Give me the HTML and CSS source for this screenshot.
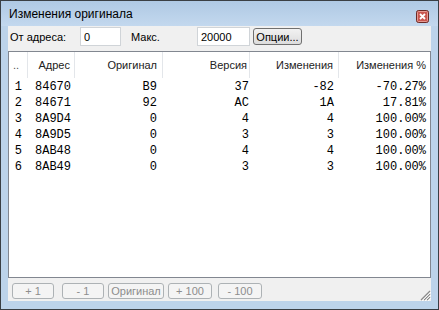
FILE: index.html
```html
<!DOCTYPE html>
<html lang="ru">
<head>
    <meta charset="UTF-8">
    <meta name="viewport" content="width=device-width, initial-scale=1.0">
    <title>Изменения оригинала</title>
    <link rel="stylesheet" href="styles.css">
</head>
<body>
    <div class="window">
        <div class="titlebar">
            <span class="title">Изменения оригинала</span>
            <span class="close">
                <svg width="13" height="13" viewBox="0 0 13 13">
                    <rect x="0.5" y="0.5" width="12" height="12" rx="2" fill="#c9564f" stroke="#6b2a26"/>
                    <rect x="1.5" y="1.5" width="10" height="10" rx="1" fill="none" stroke="#e59a93"/>
                    <path d="M4 4 L9 9 M9 4 L4 9" stroke="#fff" stroke-width="1.8"/>
                </svg>
            </span>
        </div>
        <div class="client">
            <div class="toolbar">
                <label class="lbl-from">От адреса:</label>
                <input type="text" class="inp-from" value="0">
                <label class="lbl-max">Макс.</label>
                <input type="text" class="inp-max" value="20000">
                <button class="btn-opts">Опции...</button>
            </div>

            <div class="list">
                <div class="grid head">
                    <div class="c0">..</div>
                    <div class="c1">Адрес</div>
                    <div class="c2">Оригинал</div>
                    <div class="c3">Версия</div>
                    <div class="c4">Изменения</div>
                    <div class="c5">Изменения %</div>
                </div>
                <div class="rows">
                    <div class="grid row"><div class="c0">1</div><div class="c1">84670</div><div class="c2">B9</div><div class="c3">37</div><div class="c4">-82</div><div class="c5">-70.27%</div></div>
                    <div class="grid row"><div class="c0">2</div><div class="c1">84671</div><div class="c2">92</div><div class="c3">AC</div><div class="c4">1A</div><div class="c5">17.81%</div></div>
                    <div class="grid row"><div class="c0">3</div><div class="c1">8A9D4</div><div class="c2">0</div><div class="c3">4</div><div class="c4">4</div><div class="c5">100.00%</div></div>
                    <div class="grid row"><div class="c0">4</div><div class="c1">8A9D5</div><div class="c2">0</div><div class="c3">3</div><div class="c4">3</div><div class="c5">100.00%</div></div>
                    <div class="grid row"><div class="c0">5</div><div class="c1">8AB48</div><div class="c2">0</div><div class="c3">4</div><div class="c4">4</div><div class="c5">100.00%</div></div>
                    <div class="grid row"><div class="c0">6</div><div class="c1">8AB49</div><div class="c2">0</div><div class="c3">3</div><div class="c4">3</div><div class="c5">100.00%</div></div>
                </div>
            </div>

            <div class="bottombar">
                <button class="btn-off b1" disabled>+ 1</button>
                <button class="btn-off b2" disabled>- 1</button>
                <button class="btn-off b3" disabled>Оригинал</button>
                <button class="btn-off b4" disabled>+ 100</button>
                <button class="btn-off b5" disabled>- 100</button>
                <span class="grip">
                    <svg width="11" height="11" viewBox="0 0 11 11">
                        <path d="M10 1 L1 10 M10 4 L4 10 M10 7 L7 10" stroke="#8a8a8a" stroke-width="1.2"/>
                        <path d="M11 2 L2 11 M11 5 L5 11 M11 8 L8 11" stroke="#fff" stroke-width="0.8"/>
                    </svg>
                </span>
            </div>
        </div>
    </div>
</body>
</html>
```

FILE: styles.css
```css
html, body {
    margin: 0;
    padding: 0;
    background-color: #fff;
    font-family: "Liberation Sans", Arial, sans-serif;
    font-size: 11px;
}
.window {
    width: 439px;
    height: 310px;
    box-sizing: border-box;
    border: 1px solid #3a3f44;
    background-color: #bcd3ea;
    padding: 0 7px 8px 7px;
    display: flex;
    flex-direction: column;
}
.titlebar {
    height: 25px;
    margin: 0 -7px;
    padding: 0 9px 0 8px;
    display: flex;
    align-items: center;
    background: linear-gradient(#afc9e4, #c3d8ee);
}
.title {
    font-family: "Liberation Sans", Arial, sans-serif;
    font-size: 12px;
    color: #000;
    padding-top: 1px;
}
.close {
    margin-left: auto;
    height: 13px;
    margin-top: 6px;
}
.client {
    flex: 1;
    background-color: #f0f0f0;
    display: flex;
    flex-direction: column;
}
.toolbar {
    display: flex;
    align-items: center;
    padding-top: 1px;
    height: 19px;
}
.toolbar label {
    color: #000;
}
.lbl-from {
    width: 72px;
    padding-left: 2px;
    box-sizing: border-box;
}
.lbl-max {
    width: 66px;
    margin-left: 10px;
}
input[type="text"] {
    height: 19px;
    box-sizing: border-box;
    border: 1px solid #d0d4d8;
    background-color: #fff;
    font-family: "Liberation Sans", Arial, sans-serif;
    font-size: 11px;
    padding: 0 3px;
    margin: 0;
}
.inp-from {
    width: 41px;
}
.inp-max {
    width: 53px;
}
.btn-opts {
    margin-left: 3px;
    width: 49px;
    height: 17px;
    padding: 0;
    border: 1px solid #707070;
    border-radius: 3px;
    background: linear-gradient(#f2f2f2, #dcdcdc);
    font-family: "Liberation Sans", Arial, sans-serif;
    font-size: 11px;
    color: #000;
}
.list {
    margin-top: 5px;
    height: 227px;
    box-sizing: border-box;
    border: 1px solid #828790;
    background-color: #fff;
}
.grid {
    display: grid;
    grid-template-columns: 19px 47px 88px 87px 89px 1fr;
}
.head {
    height: 26px;
    align-items: center;
    color: #222;
}
.head > div {
    height: 100%;
    display: flex;
    align-items: center;
    justify-content: flex-end;
    border-right: 1px solid #e3e6ea;
    box-sizing: border-box;
}
.head .c0 {
    justify-content: flex-start;
    padding-left: 4px;
    color: #555;
}
.head .c1 { padding-right: 4px; }
.head .c2 { padding-right: 5px; }
.head .c3 { padding-right: 2px; }
.head .c4 { padding-right: 5px; }
.head .c5 { padding-right: 4px; border-right: none; }
.rows {
    padding-top: 1px;
}
.row {
    height: 16px;
    line-height: 16px;
    font-family: "Liberation Mono", "Courier New", monospace;
    font-size: 12px;
    color: #000;
}
.row > div {
    text-align: right;
    white-space: nowrap;
}
.row .c0 { padding-right: 6px; }
.row .c1 { text-align: left; padding-left: 7px; }
.row .c2 { padding-right: 6px; }
.row .c3 { padding-right: 1px; }
.row .c4 { padding-right: 5px; }
.row .c5 { padding-right: 4px; }
.bottombar {
    flex: 1;
    display: flex;
    align-items: flex-start;
    padding: 5px 0 0 4px;
}
.btn-off {
    height: 16px;
    padding: 0;
    border: 1px solid #adb2b5;
    border-radius: 3px;
    background-color: #f4f4f4;
    color: #8d8d8d;
    font-family: "Liberation Sans", Arial, sans-serif;
    font-size: 11px;
    line-height: 14px;
}
.b1 { width: 42px; }
.b2 { width: 42px; margin-left: 8px; }
.b3 { width: 56px; margin-left: 4px; }
.b4 { width: 44px; margin-left: 4px; }
.b5 { width: 44px; margin-left: 6px; }
.grip {
    margin-left: auto;
    align-self: flex-end;
    height: 11px;
    line-height: 0;
}
```
